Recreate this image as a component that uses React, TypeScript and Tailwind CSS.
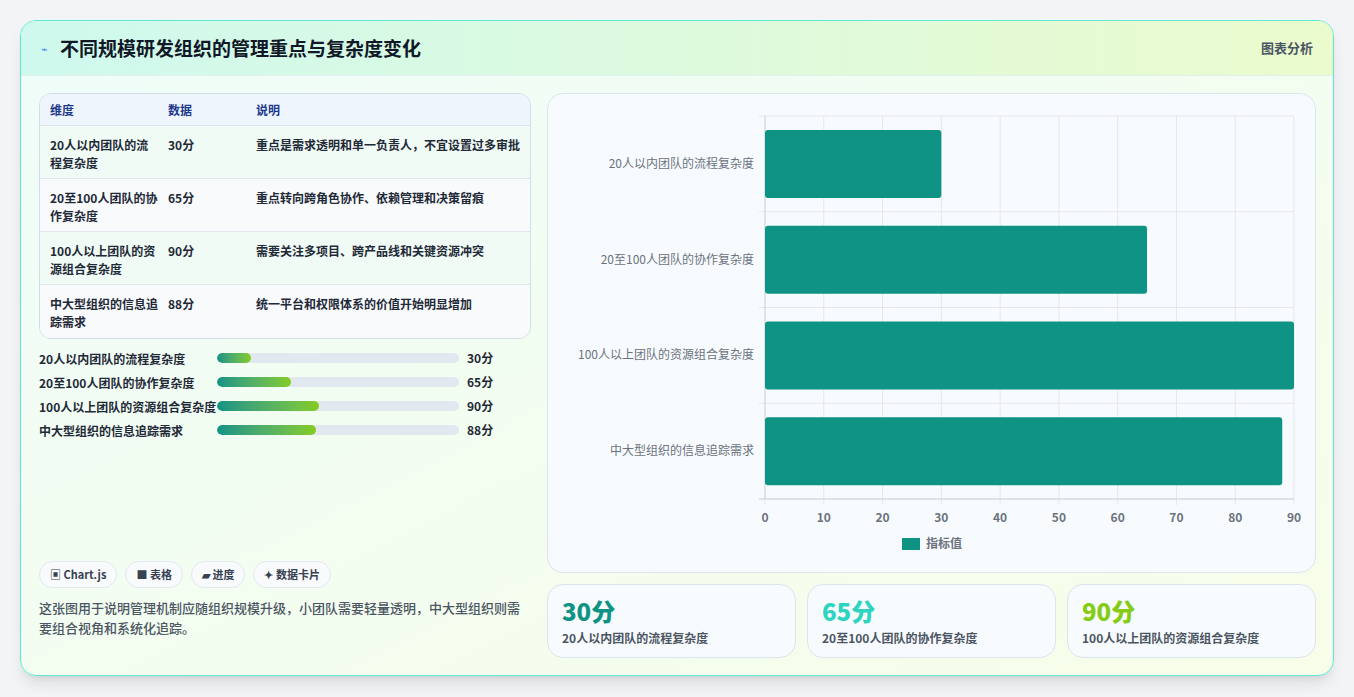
import React from "react";

const rows = [
  ["20人以内团队的流程复杂度", "30分", "重点是需求透明和单一负责人，不宜设置过多审批", 30],
  ["20至100人团队的协作复杂度", "65分", "重点转向跨角色协作、依赖管理和决策留痕", 65],
  ["100人以上团队的资源组合复杂度", "90分", "需要关注多项目、跨产品线和关键资源冲突", 90],
  ["中大型组织的信息追踪需求", "88分", "统一平台和权限体系的价值开始明显增加", 88],
] as const;

function Chart() {
  const x0 = 217, x1 = 746, y0 = 22, y1 = 405;
  const w = x1 - x0, band = (y1 - y0) / 4;
  return (
    <svg width="768" height="479" style={{ fontFamily: '"Noto Sans CJK SC", sans-serif' }}>
      {Array.from({ length: 10 }).map((_, i) => {
        const x = x0 + (w * i) / 9;
        return (
          <g key={i}>
            <line x1={x} x2={x} y1={y0} y2={y1 + 6} stroke="#e5e7eb" />
            <text x={x} y={428} textAnchor="middle" fontSize="12" fontWeight="600" fill="#6b7280">{i * 10}</text>
          </g>
        );
      })}
      {Array.from({ length: 5 }).map((_, i) => (
        <line key={i} x1={x0 - 6} x2={x1} y1={y0 + band * i} y2={y0 + band * i} stroke="#e5e7eb" />
      ))}
      <line x1={x0} x2={x0} y1={y0} y2={y1} stroke="#d1d5db" />
      <line x1={x0 - 6} x2={x1} y1={y1} y2={y1} stroke="#cbd5e1" />
      {rows.map((r, i) => (
        <g key={i}>
          <rect x={x0} y={y0 + band * i + 14} width={(w * (r[3] as number)) / 90} height={68} rx="3" fill="#0e9384" />
          <text x={206} y={y0 + band * i + band / 2 + 4} textAnchor="end" fontSize="12" fill="#6b7280">{r[0]}</text>
        </g>
      ))}
      <rect x={354} y={444} width={18} height={12} fill="#0e9384" />
      <text x={378} y={454} fontSize="12" fontWeight="600" fill="#6b7280">指标值</text>
    </svg>
  );
}

export default function App() {
  return (
    <div className="w-[1354px] h-[697px] bg-[#f3f4f6] pt-5 pl-5" style={{ fontFamily: '"Noto Sans CJK SC", "Noto Sans", sans-serif' }}>
      <div className="w-[1314px] h-[656px] rounded-2xl border border-[#5eead4] overflow-hidden shadow-lg bg-gradient-to-br from-[#effdf9] to-[#f7fde8] flex flex-col">
        <div className="h-[55px] shrink-0 flex items-center justify-between px-5 bg-gradient-to-r from-[#cff9ee] to-[#ebfbcd] border-b border-[#e0f2ef]">
          <div className="flex items-center gap-3">
            <span className="text-[#3b82f6] text-[11px]">⌁</span>
            <span className="text-[19px] font-bold text-[#111827]">不同规模研发组织的管理重点与复杂度变化</span>
          </div>
          <span className="text-[13px] font-semibold text-[#4b5563]">图表分析</span>
        </div>
        <div className="flex gap-4 px-[18px] pt-[17px]">
          <div className="w-[492px] h-[563px] flex flex-col">
            <div className="rounded-xl border border-[#d1dde9] overflow-hidden bg-[#f8fafc]">
              <div className="h-[32px] grid grid-cols-[118px_88px_1fr] items-center px-[10px] bg-[#eef5fd] border-b border-[#dbe3ee] text-[12px] font-semibold text-[#1e3a8a]">
                <div>维度</div><div>数据</div><div>说明</div>
              </div>
              {rows.map((r, i) => (
                <div key={i} className={`h-[53px] grid grid-cols-[118px_88px_1fr] pt-[10px] px-[10px] text-[12px] font-semibold text-[#1f2937] leading-[18px] ${i < 3 ? "border-b border-[#dfe6ee]" : ""} ${i % 2 ? "bg-[#f8fafc]" : "bg-[#f0fbf5]"}`}>
                  <div className="pr-2">{r[0]}</div><div>{r[1]}</div><div className="whitespace-nowrap">{r[2]}</div>
                </div>
              ))}
            </div>
            <div className="mt-[10px] flex flex-col gap-[6px]">
              {rows.map((r, i) => (
                <div key={i} className="flex items-center min-h-[18px]">
                  <div className="w-[178px] text-[12px] font-bold text-[#1f2937] leading-[17px]">{r[0]}</div>
                  <div className="w-[242px] h-[10px] rounded-full bg-[#e2e8f0] overflow-hidden">
                    <div className="h-full rounded-full bg-gradient-to-r from-[#0e9384] to-[#84cc16]" style={{ width: `${(r[3] as number) * 1.1}%`, maxWidth: "100%" , ...( { width: `${(r[3] as number) === 30 ? 14 : (r[3] as number) === 65 ? 30.5 : (r[3] as number) === 90 ? 42 : 41}%` }) }} />
                  </div>
                  <div className="ml-2 text-[12px] font-bold text-[#1f2937]">{r[1]}</div>
                </div>
              ))}
            </div>
            <div className="mt-auto mb-[18px]">
              <div className="flex gap-2 text-[11px] font-semibold text-[#374151]">
                {["▣ Chart.js", "■ 表格", "▰ 进度", "✦ 数据卡片"].map((t) => (
                  <span key={t} className="h-[27px] px-[10px] rounded-full border border-[#e2e8f0] bg-[#f8fafc] flex items-center">{t}</span>
                ))}
              </div>
              <p className="mt-[10px] text-[13px] leading-[20px] text-[#4b5563] font-medium">这张图用于说明管理机制应随组织规模升级，小团队需要轻量透明，中大型组织则需要组合视角和系统化追踪。</p>
            </div>
          </div>
          <div className="w-[769px] flex flex-col gap-[11px]">
            <div className="h-[480px] rounded-2xl border border-[#dbe5ee] bg-[#f8fbfd] overflow-hidden">
              <Chart />
            </div>
            <div className="grid grid-cols-3 gap-[11px]">
              {[["30分", "text-[#0e9384]", rows[0][0]], ["65分", "text-[#2dd4bf]", rows[1][0]], ["90分", "text-[#84cc16]", rows[2][0]]].map(([v, c, l]) => (
                <div key={v} className="h-[74px] rounded-2xl border border-[#dbe5ee] bg-[#f8fbfd] px-[14px] pt-[10px]">
                  <div className={`text-[24px] font-extrabold leading-[32px] ${c}`}>{v}</div>
                  <div className="text-[12px] font-semibold text-[#4b5563] mt-[2px]">{l}</div>
                </div>
              ))}
            </div>
          </div>
        </div>
      </div>
    </div>
  );
}
